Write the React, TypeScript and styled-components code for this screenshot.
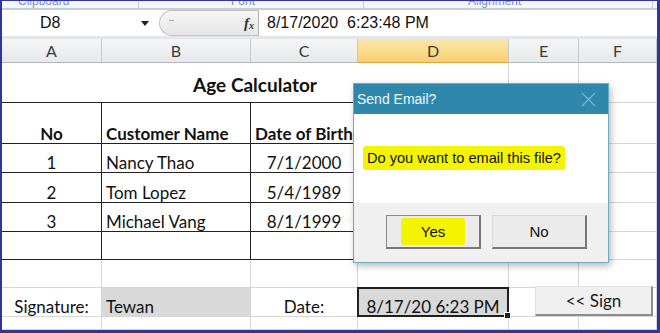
import React from 'react';
import styled, { createGlobalStyle } from 'styled-components';

const GRID = '#d6d6d6';
const INK = '#222';

const GlobalStyle = createGlobalStyle`
  html, body {
    margin: 0;
    padding: 0;
    background: #fff;
    overflow: hidden;
  }
`;

const Frame = styled.div`
  position: relative;
  box-sizing: border-box;
  width: 660px;
  height: 333px;
  overflow: hidden;
  background: #fff;
  border-top: 1px solid #33339c;
  border-left: 2px solid #33339c;
  border-right: 3px solid #33339c;
  border-bottom: 3px solid #33339c;
  font-family: Lato, "Liberation Sans", sans-serif;
  color: #111;
`;

const RibbonStrip = styled.div`
  display: flex;
  height: 7px;
  overflow: hidden;
  background: #f3f6fb;
  border-bottom: 2px solid #c7cdd6;
`;

const RibbonGroup = styled.div<{ $w: number; $pad: number }>`
  box-sizing: border-box;
  width: ${p => p.$w}px;
  padding-left: ${p => p.$pad}px;
  border-right: 1px solid #c4ccd8;
  font-family: "Liberation Sans", sans-serif;
  font-size: 12px;
  line-height: 12px;
  color: #7f90bf;
  margin-top: -6px;
  white-space: nowrap;
`;

const FormulaBar = styled.div`
  display: flex;
  height: 26px;
  background: #fff;
  font-family: "Liberation Sans", sans-serif;
  font-size: 16px;
  color: #111;
`;

const NameBox = styled.div`
  box-sizing: border-box;
  width: 138px;
  display: flex;
  align-items: center;
  padding-left: 38px;
`;

const DropArrow = styled.div`
  width: 19px;
  display: flex;
  align-items: center;
  padding-left: 1px;
  box-sizing: border-box;
  &::after {
    content: '';
    border-left: 4px solid transparent;
    border-right: 4px solid transparent;
    border-top: 5px solid #222;
  }
`;

const FxPill = styled.div`
  box-sizing: border-box;
  width: 100px;
  height: 26px;
  display: flex;
  align-items: center;
  justify-content: space-between;
  padding: 0 4px 0 9px;
  border: 1px solid #c2c2c2;
  border-right: 1px solid #b5b5b5;
  border-radius: 13px 0 0 13px;
  background: linear-gradient(#f6f6f6, #e6e6e6);
`;

const Grip = styled.span`
  width: 5px;
  height: 1px;
  background: #b0b0b0;
  margin-bottom: 6px;
`;

const FxLabel = styled.span`
  font-family: "Liberation Serif", serif;
  font-style: italic;
  font-weight: 700;
  font-size: 15px;
  color: #333;
  sub {
    font-size: 10px;
    vertical-align: -1px;
  }
`;

const FormulaInput = styled.div`
  flex: 1;
  display: flex;
  align-items: center;
  padding-left: 8px;
  white-space: pre;
`;

const BarGap = styled.div`
  height: 3px;
  background: #e4e6ea;
`;

const Sheet = styled.div`
  display: grid;
  grid-template-columns: 100px 149px 107px 151px 70px 78px;
  grid-template-rows: 24px 40px 41px 29px 30px 29px 28px 28px 29px 13px;
  font-size: 17px;
  line-height: 17px;
`;

const ColHead = styled.div<{ $active?: boolean }>`
  box-sizing: border-box;
  display: flex;
  align-items: center;
  justify-content: center;
  font-size: 16px;
  color: #3a3a3a;
  background: ${p => (p.$active ? 'linear-gradient(#fce7a8, #f7cf72)' : 'linear-gradient(#f4f5f6, #e8e9eb)')};
  border-right: 1px solid #c6c8cc;
  border-bottom: 1px solid ${p => (p.$active ? '#e0a63a' : '#b4b7bc')};
`;

type Align = 'left' | 'center';

const Cell = styled.div<{
  $align?: Align;
  $bold?: boolean;
  $right?: string;
  $bottom?: string;
  $fill?: string;
  $span?: number;
  $selected?: boolean;
}>`
  position: relative;
  box-sizing: border-box;
  display: flex;
  align-items: flex-end;
  justify-content: ${p => (p.$align === 'center' ? 'center' : 'flex-start')};
  padding: 0 4px 1px;
  border-right: 1px solid ${p => p.$right || GRID};
  border-bottom: 1px solid ${p => p.$bottom || GRID};
  background: ${p => p.$fill || '#fff'};
  font-weight: ${p => (p.$bold ? 700 : 400)};
  grid-column: ${p => (p.$span ? `span ${p.$span}` : 'auto')};
  white-space: nowrap;
  ${p =>
    p.$selected &&
    `
    &::after {
      content: '';
      position: absolute;
      inset: -1px;
      border: 2px solid #1f1f1f;
      pointer-events: none;
    }
    &::before {
      content: '';
      position: absolute;
      right: -3px;
      bottom: -3px;
      width: 5px;
      height: 5px;
      background: #1f1f1f;
      border: 1px solid #fff;
      z-index: 1;
    }
  `}
`;

const TitleCell = styled(Cell)`
  align-items: center;
  padding-top: 4px;
  font-size: 19px;
`;

const SignButton = styled.div`
  position: absolute;
  left: 533px;
  top: 285px;
  box-sizing: border-box;
  width: 118px;
  height: 30px;
  display: flex;
  align-items: center;
  justify-content: center;
  font-size: 17px;
  color: #1a1a1a;
  background: #f0f0f0;
  border-top: 1px solid #e2e2e2;
  border-left: 1px solid #e2e2e2;
  border-right: 2px solid #8c8c8c;
  border-bottom: 2px solid #8c8c8c;
`;

const Dialog = styled.div`
  position: absolute;
  left: 351px;
  top: 82px;
  width: 256px;
  height: 180px;
  box-sizing: border-box;
  display: flex;
  flex-direction: column;
  border: 1px solid #6fa9c2;
  background: #fff;
  box-shadow: 2px 3px 7px rgba(0, 0, 0, 0.28);
  font-family: "Liberation Sans", sans-serif;
  color: #111;
`;

const TitleBar = styled.div`
  height: 30px;
  flex: none;
  display: flex;
  align-items: center;
  justify-content: space-between;
  padding: 0 12px 0 3px;
  background: #2f88ab;
  color: #eef6f9;
  font-size: 14px;
`;

const DialogBody = styled.div`
  height: 87px;
  flex: none;
  display: flex;
  align-items: center;
  padding: 0 0 2px 9px;
`;

const Marker = styled.span<{ $px: number; $py: number }>`
  background: #f4f400;
  padding: ${p => p.$py}px ${p => p.$px}px;
  border-radius: 3px;
`;

const Message = styled.span`
  font-size: 14.6px;
`;

const DialogFooter = styled.div`
  flex: 1;
  display: flex;
  gap: 11px;
  padding: 12px 0 0 32px;
  background: #f0f0f0;
`;

const DlgButton = styled.div<{ $default?: boolean }>`
  box-sizing: border-box;
  width: 95px;
  height: 34px;
  display: flex;
  align-items: center;
  justify-content: center;
  font-size: 15px;
  background: #ebebeb;
  border-top: 1px solid ${p => (p.$default ? '#8a8a8a' : '#dadada')};
  border-left: 1px solid ${p => (p.$default ? '#8a8a8a' : '#dadada')};
  border-right: 2px solid #777;
  border-bottom: 2px solid #777;
`;

function CloseIcon() {
  return (
    <svg width="15" height="15" viewBox="0 0 15 15">
      <path d="M1 1 L14 14 M14 1 L1 14" stroke="#7db6cd" strokeWidth="1.2" fill="none" />
    </svg>
  );
}

const rows = [
  { no: '1', name: 'Nancy Thao', dob: '7/1/2000' },
  { no: '2', name: 'Tom Lopez', dob: '5/4/1989' },
  { no: '3', name: 'Michael Vang', dob: '8/1/1999' },
];

export default function App() {
  return (
    <Frame>
      <GlobalStyle />
      <RibbonStrip>
        <RibbonGroup $w={137} $pad={16}>Clipboard</RibbonGroup>
        <RibbonGroup $w={225} $pad={92}>Font</RibbonGroup>
        <RibbonGroup $w={289} $pad={104}>Alignment</RibbonGroup>
      </RibbonStrip>

      <FormulaBar>
        <NameBox>D8</NameBox>
        <DropArrow />
        <FxPill>
          <Grip />
          <FxLabel>
            f<sub>x</sub>
          </FxLabel>
        </FxPill>
        <FormulaInput>8/17/2020  6:23:48 PM</FormulaInput>
      </FormulaBar>
      <BarGap />

      <Sheet>
        {['A', 'B', 'C', 'D', 'E', 'F'].map(c => (
          <ColHead key={c} $active={c === 'D'}>
            {c}
          </ColHead>
        ))}

        <TitleCell $span={4} $align="center" $bold $bottom={INK}>
          Age Calculator
        </TitleCell>
        <Cell />
        <Cell />

        <Cell $align="center" $bold $right={INK} $bottom={INK}>No</Cell>
        <Cell $bold $right={INK} $bottom={INK}>Customer Name</Cell>
        <Cell $align="center" $bold $right={INK} $bottom={INK}>Date of Birth</Cell>
        <Cell $right={INK} $bottom={INK} />
        <Cell />
        <Cell />

        {rows.map(r => (
          <React.Fragment key={r.no}>
            <Cell $align="center" $right={INK} $bottom={INK}>{r.no}</Cell>
            <Cell $right={INK} $bottom={INK}>{r.name}</Cell>
            <Cell $align="center" $right={INK} $bottom={INK}>{r.dob}</Cell>
            <Cell $right={INK} $bottom={INK} />
            <Cell />
            <Cell />
          </React.Fragment>
        ))}

        <Cell $right={INK} $bottom={INK} />
        <Cell $right={INK} $bottom={INK} />
        <Cell $right={INK} $bottom={INK} />
        <Cell $right={INK} $bottom={INK} />
        <Cell />
        <Cell />

        {Array.from({ length: 6 }).map((_, i) => (
          <Cell key={`r7-${i}`} />
        ))}

        <Cell $align="center">Signature:</Cell>
        <Cell $fill="#d9d9d9">Tewan</Cell>
        <Cell $align="center">Date:</Cell>
        <Cell $align="center" $fill="#d9d9d9" $selected>8/17/20 6:23 PM</Cell>
        <Cell />
        <Cell />

        {Array.from({ length: 6 }).map((_, i) => (
          <Cell key={`r9-${i}`} />
        ))}
      </Sheet>

      <SignButton>&lt;&lt; Sign</SignButton>

      <Dialog>
        <TitleBar>
          <span>Send Email?</span>
          <CloseIcon />
        </TitleBar>
        <DialogBody>
          <Marker $px={4} $py={3}>
            <Message>Do you want to email this file?</Message>
          </Marker>
        </DialogBody>
        <DialogFooter>
          <DlgButton $default>
            <Marker $px={20} $py={5}>Yes</Marker>
          </DlgButton>
          <DlgButton>No</DlgButton>
        </DialogFooter>
      </Dialog>
    </Frame>
  );
}
